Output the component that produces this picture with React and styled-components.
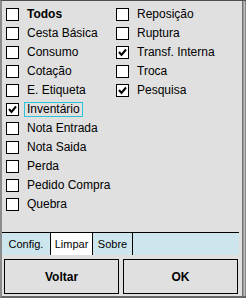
import styled, { createGlobalStyle } from 'styled-components';

const leftItems = [
    { label: 'Todos', bold: true },
    { label: 'Cesta Básica' },
    { label: 'Consumo' },
    { label: 'Cotação' },
    { label: 'E. Etiqueta' },
    { label: 'Inventário', checked: true, focused: true },
    { label: 'Nota Entrada' },
    { label: 'Nota Saida' },
    { label: 'Perda' },
    { label: 'Pedido Compra' },
    { label: 'Quebra' },
];

const rightItems = [
    { label: 'Reposição' },
    { label: 'Ruptura' },
    { label: 'Transf. Interna', checked: true },
    { label: 'Troca' },
    { label: 'Pesquisa', checked: true },
];

const tabs = [
    { label: 'Config.', width: 49 },
    { label: 'Limpar', width: 42, active: true },
    { label: 'Sobre', width: 40 },
];

function CheckItem({ label, bold, checked, focused }) {
    return (
        <Row>
            <Box>
                {checked && (
                    <svg width="11" height="11" viewBox="0 0 11 11">
                        <polyline points="2,5 4.5,8 9,2.5" fill="none" stroke="#000" strokeWidth="2" />
                    </svg>
                )}
            </Box>
            <Label $bold={bold} $focused={focused}>{label}</Label>
        </Row>
    );
}

export default function App() {
    return (
        <>
            <GlobalStyle />
            <Window>
                <Main>
                    <List>
                        <Column>
                            {leftItems.map((item) => <CheckItem key={item.label} {...item} />)}
                        </Column>
                        <Column>
                            {rightItems.map((item) => <CheckItem key={item.label} {...item} />)}
                        </Column>
                    </List>
                    <TabBar>
                        {tabs.map((t) => (
                            <Tab key={t.label} $width={t.width} $active={t.active}>{t.label}</Tab>
                        ))}
                    </TabBar>
                    <ButtonRow>
                        <Button>Voltar</Button>
                        <Button>OK</Button>
                    </ButtonRow>
                </Main>
                <Edge />
            </Window>
        </>
    );
}

const GlobalStyle = createGlobalStyle`
html, body {
    margin: 0;
    padding: 0;
    width: 246px;
    height: 298px;
    overflow: hidden;
    background: #e0e0e0;
}
body {
    font-family: "Liberation Sans", Arial, sans-serif;
    font-size: 12px;
    color: #000;
}
`;

const Window = styled.div`
    display: flex;
    width: 246px;
    height: 298px;
    box-sizing: border-box;
    background: #e0e0e0;
    border-top: 1px solid #505050;
    border-left: 2px solid #8c8c8c;
    border-bottom: 2px solid #666;
`;

const Main = styled.div`
    flex: 1;
    min-width: 0;
    display: flex;
    flex-direction: column;
`;

const Edge = styled.div`
    width: 4px;
    background: linear-gradient(to right, #5e5e5e, #a8a8a8 45%, #c4c4c4 60%, #6a6a6a);
`;

const List = styled.div`
    height: 231px;
    box-sizing: border-box;
    padding: 4px 0 0 4px;
    display: grid;
    grid-template-columns: 110px 1fr;
    align-items: start;
`;

const Column = styled.div`
    display: flex;
    flex-direction: column;
`;

const Row = styled.div`
    display: flex;
    align-items: center;
    height: 19px;
`;

const Box = styled.div`
    width: 13px;
    height: 13px;
    box-sizing: border-box;
    border: 1px solid #000;
    background: #fff;
    margin-right: 5px;
    display: flex;
    align-items: center;
    justify-content: center;
    flex-shrink: 0;
`;

const Label = styled.span`
    padding: 0 2px;
    line-height: 13px;
    border: 1px solid ${(p) => (p.$focused ? '#2bc3d6' : 'transparent')};
    font-weight: ${(p) => (p.$bold ? 'bold' : 'normal')};
    white-space: nowrap;
`;

const TabBar = styled.div`
    height: 23px;
    box-sizing: border-box;
    margin-right: 3px;
    display: flex;
    background: #cde6ee;
    border-top: 1px solid #000;
`;

const Tab = styled.div`
    width: ${(p) => p.$width}px;
    box-sizing: border-box;
    border-right: 1px solid #000;
    background: ${(p) => (p.$active ? '#fff' : 'transparent')};
    font-size: 11px;
    display: flex;
    align-items: center;
    justify-content: center;
`;

const ButtonRow = styled.div`
    height: 41px;
    box-sizing: border-box;
    padding: 4px 4px 2px 2px;
    display: flex;
    gap: 4px;
`;

const Button = styled.button`
    flex: 1;
    height: 35px;
    border: 1px solid #000;
    background: #e0e0e0;
    font-family: "Liberation Sans", Arial, sans-serif;
    font-size: 12px;
    font-weight: bold;
    color: #000;
    padding: 0;
`;
